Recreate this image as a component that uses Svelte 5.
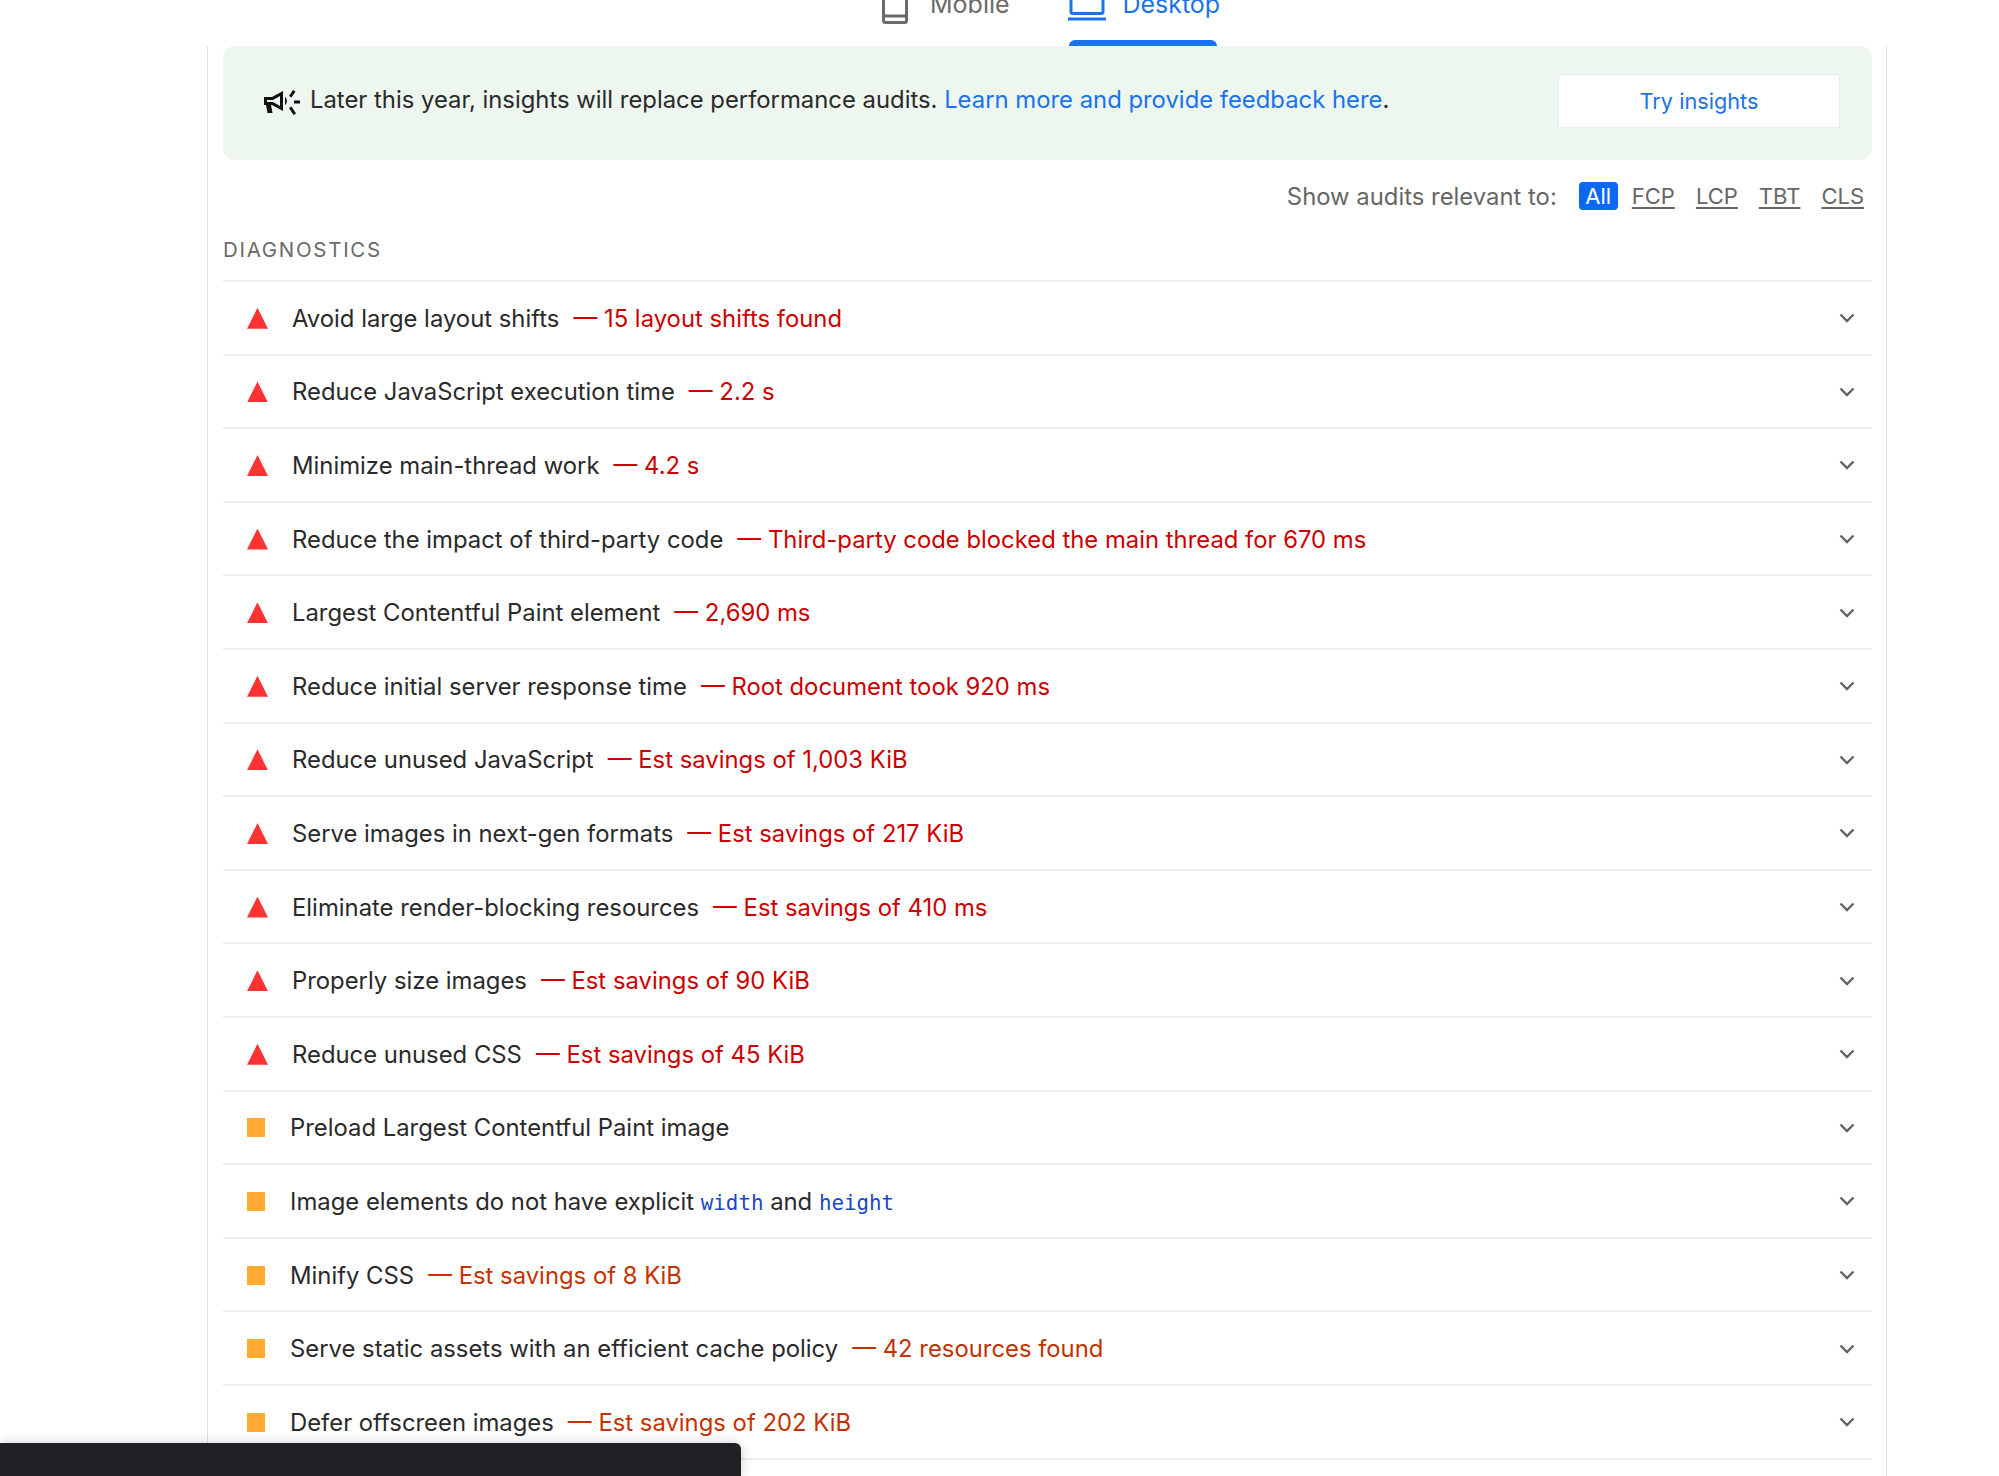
<script lang="ts">
  interface Audit {
    title: string;
    value?: string;
    level: 'fail' | 'average';
    code?: boolean;
  }

  const audits: Audit[] = [
    { title: 'Avoid large layout shifts', value: '15 layout shifts found', level: 'fail' },
    { title: 'Reduce JavaScript execution time', value: '2.2 s', level: 'fail' },
    { title: 'Minimize main-thread work', value: '4.2 s', level: 'fail' },
    { title: 'Reduce the impact of third-party code', value: 'Third-party code blocked the main thread for 670 ms', level: 'fail' },
    { title: 'Largest Contentful Paint element', value: '2,690 ms', level: 'fail' },
    { title: 'Reduce initial server response time', value: 'Root document took 920 ms', level: 'fail' },
    { title: 'Reduce unused JavaScript', value: 'Est savings of 1,003 KiB', level: 'fail' },
    { title: 'Serve images in next-gen formats', value: 'Est savings of 217 KiB', level: 'fail' },
    { title: 'Eliminate render-blocking resources', value: 'Est savings of 410 ms', level: 'fail' },
    { title: 'Properly size images', value: 'Est savings of 90 KiB', level: 'fail' },
    { title: 'Reduce unused CSS', value: 'Est savings of 45 KiB', level: 'fail' },
    { title: 'Preload Largest Contentful Paint image', level: 'average' },
    { title: 'Image elements do not have explicit', level: 'average', code: true },
    { title: 'Minify CSS', value: 'Est savings of 8 KiB', level: 'average' },
    { title: 'Serve static assets with an efficient cache policy', value: '42 resources found', level: 'average' },
    { title: 'Defer offscreen images', value: 'Est savings of 202 KiB', level: 'average' }
  ];

  const metrics = ['FCP', 'LCP', 'TBT', 'CLS'];
</script>

<div class="page">
  <nav class="tabs">
    <span class="tab">
      <svg class="phone" width="26" height="40" viewBox="0 0 26 40" fill="none" stroke="currentColor" stroke-width="3">
        <rect x="1.5" y="1.5" width="23" height="37" rx="2" />
        <line x1="2" y1="32" x2="24" y2="32" />
      </svg>
      Mobile
    </span>
    <span class="tab tab--active">
      <svg class="laptop" width="40" height="36" viewBox="0 0 40 36" fill="none" stroke="currentColor" stroke-width="3">
        <rect x="4" y="1.5" width="32" height="27" rx="2" />
        <line x1="1" y1="34" x2="39" y2="34" />
      </svg>
      Desktop
    </span>
  </nav>

  <main class="panel">
    <section class="banner">
      <svg class="megaphone" width="36" height="28" viewBox="0 0 36 28" fill="#111">
        <path d="M0 8h8L19 2v20L8 16H7l1.500 8H3.500L2 16H0z M3 11v2h6l7 4V7L9 11z" fill-rule="evenodd" />
        <path d="M21 8c2.500 1.500 2.500 6.500 0 8z" />
        <path d="M25 7l4-6 2.500 1.500-4 6z M30 11.500h6v3h-6z M25 19l2.500-1.500 4.500 7-2.500 1.500z" />
      </svg>
      <p class="banner__text">Later this year, insights will replace performance audits. <a href="#feedback">Learn more and provide feedback here</a>.</p>
      <button type="button" class="banner__btn">Try insights</button>
    </section>

    <div class="filter">
      <span class="filter__label">Show audits relevant to:</span>
      <span class="chip chip--on">All</span>
      {#each metrics as metric}
        <span class="chip">{metric}</span>
      {/each}
    </div>

    <h2 class="group-title">DIAGNOSTICS</h2>

    <ul class="audits">
      {#each audits as audit}
        <li class="audit audit--{audit.level}">
          <span class="audit__icon"></span>
          <span class="audit__title">
            {audit.title}
            {#if audit.code}
              <code>width</code> and <code>height</code>
            {/if}
          </span>
          {#if audit.value}
            <span class="audit__value">— {audit.value}</span>
          {/if}
          <svg class="audit__chevron" width="16" height="10" viewBox="0 0 16 10" fill="none" stroke="#5f6368" stroke-width="2.4">
            <polyline points="1.500 1.500 8 8 14.500 1.500" />
          </svg>
        </li>
      {/each}
    </ul>
  </main>

  <div class="toast"></div>
</div>

<style>
  :global(body) {
    margin: 0;
    background: #fff;
  }

  .page {
    position: relative;
    height: 1476px;
    overflow: hidden;
    font-family: Inter, "Noto Sans", sans-serif;
    font-size: 23.85px;
    color: #2a2a2a;
  }

  /* Tabs, cut off by the top of the shot */
  .tabs {
    display: flex;
    justify-content: flex-start;
    align-items: flex-end;
    height: 46px;
    padding-left: 882px;
    box-sizing: border-box;
    gap: 46px;
    font-size: 25px;
  }

  .tab {
    display: flex;
    align-items: flex-end;
    gap: 22px;
    color: #6a6a6a;
    height: 46px;
    padding-bottom: 29px;
    box-sizing: border-box;
    line-height: 26px;
    position: relative;
    white-space: nowrap;
  }

  .tab svg {
    flex: none;
    margin-bottom: -7px;
  }

  .tab--active {
    color: #1a73e8;
    gap: 16px;
    margin-left: 11px;
    letter-spacing: -0.05px;
  }

  .tab--active svg {
    margin-bottom: -4px;
  }

  .tab--active::after {
    content: '';
    position: absolute;
    left: 2px;
    right: 3px;
    bottom: 0;
    height: 6px;
    background: #1a73e8;
    border-radius: 6px 6px 0 0;
  }

  .panel {
    width: 1680px;
    margin-left: 207px;
    height: 1430px;
    box-sizing: border-box;
    padding: 0 14px 0 15px;
    border-left: 1px solid #e0e0e0;
    border-right: 1px solid #e0e0e0;
  }

  .banner {
    display: flex;
    align-items: center;
    height: 114px;
    padding: 0 32px 0 41px;
    background: #edf7f0;
    border-radius: 12px;
    box-sizing: border-box;
  }

  .megaphone {
    flex: none;
    margin-right: 10px;
  }

  .banner__text {
    flex: 1;
    margin: 0 0 7px;
    white-space: nowrap;
  }

  .banner__text a {
    color: #1a73e8;
    text-decoration: none;
  }

  .banner__btn {
    flex: none;
    width: 282px;
    height: 54px;
    margin-bottom: 4px;
    border: 1px solid #e6eee8;
    border-radius: 3px;
    background: #fff;
    color: #1a73e8;
    font: inherit;
    font-size: 21.7px;
  }

  .filter {
    display: flex;
    justify-content: flex-end;
    align-items: center;
    height: 28px;
    margin-top: 22px;
    padding-right: 8px;
    color: #666;
    gap: 21px;
  }

  .filter__label {
    margin-right: 1px;
  }

  .chip {
    font-size: 22px;
    text-decoration: underline;
    text-underline-offset: 3px;
    line-height: 28px;
    color: #666;
  }

  .chip--on {
    width: 39px;
    margin-right: -7px;
    text-align: center;
    background: #0b69f0;
    color: #fff;
    border-radius: 4px;
    text-decoration: none;
  }

  .group-title {
    margin: 27px 0 0;
    font-size: 20.500px;
    font-weight: 400;
    letter-spacing: 1.700px;
    line-height: 25px;
    color: #6a6a6a;
  }

  .audits {
    list-style: none;
    margin: 18px 0 0;
    padding: 0;
    border-top: 2px solid #eeeeee;
  }

  .audit {
    display: flex;
    align-items: center;
    height: 73.600px;
    padding-top: 1px;
    box-sizing: border-box;
    border-bottom: 2px solid #eeeeee;
    white-space: nowrap;
  }

  .audit__icon {
    flex: none;
    margin-left: 24px;
  }

  .audit--fail .audit__icon {
    width: 21px;
    height: 21px;
    margin-right: 24px;
    background: #ff3333;
    clip-path: polygon(50% 0, 100% 100%, 0 100%);
  }

  .audit--average .audit__icon {
    width: 18px;
    height: 19px;
    margin-right: 25px;
    background: #ffaa33;
  }

  .audit__title {
    margin-right: 14px;
  }

  code {
    font-family: "DejaVu Sans Mono", monospace;
    font-size: 20.800px;
    color: #1a47c8;
  }

  .audit--fail .audit__value {
    color: #cc0000;
  }

  .audit--average .audit__value {
    color: #c33300;
  }

  .audit__chevron {
    margin-left: auto;
    margin-right: 17px;
    flex: none;
  }

  /* dark bar over the bottom corner */
  .toast {
    position: absolute;
    left: 0;
    bottom: 0;
    width: 741px;
    height: 33px;
    background: #202124;
    border-radius: 0 6px 0 0;
    box-shadow: 0 0 12px rgba(0, 0, 0, 0.2);
  }
</style>
